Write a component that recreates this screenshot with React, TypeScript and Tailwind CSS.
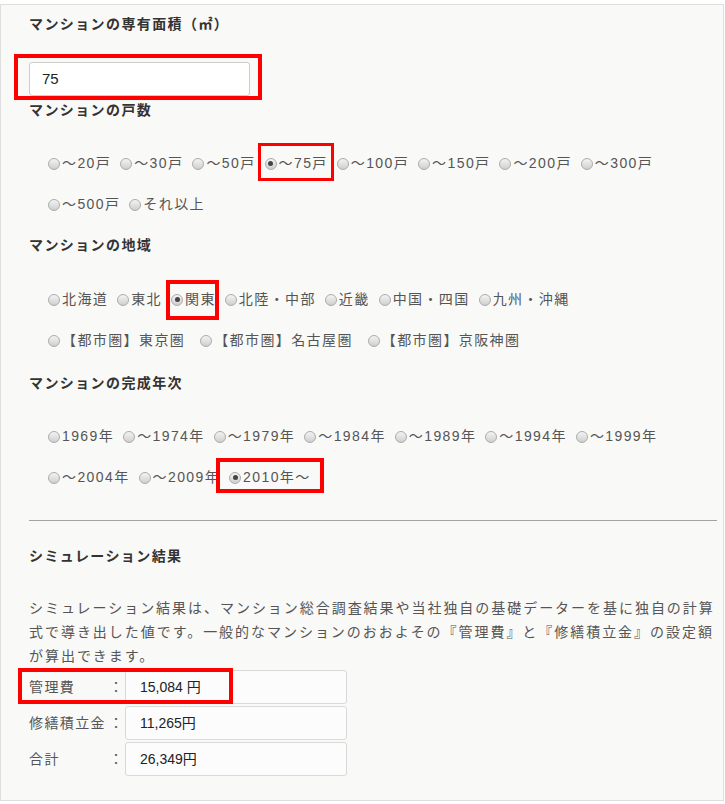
import React from "react";

type Opt = { label: string; checked?: boolean; mark?: string; gap?: string };

const sizeRows: Opt[][] = [
  [
    { label: "〜20戸" },
    { label: "〜30戸" },
    { label: "〜50戸" },
    {
      label: "〜75戸",
      checked: true,
      mark: "-left-[7px] -right-[6px] -top-[11px] -bottom-[7px] border-[3px]",
    },
    { label: "〜100戸" },
    { label: "〜150戸" },
    { label: "〜200戸" },
    { label: "〜300戸" },
  ],
  [{ label: "〜500戸" }, { label: "それ以上" }],
];

const areaRows: Opt[][] = [
  [
    { label: "北海道" },
    { label: "東北" },
    {
      label: "関東",
      checked: true,
      mark: "-left-[5px] -right-[3px] -top-[10px] -bottom-[10px] border-4",
    },
    { label: "北陸・中部" },
    { label: "近畿" },
    { label: "中国・四国" },
    { label: "九州・沖縄" },
  ],
  [
    { label: "【都市圏】東京圏", gap: "mr-[15px]" },
    { label: "【都市圏】名古屋圏", gap: "mr-[15px]" },
    { label: "【都市圏】京阪神圏", gap: "mr-[15px]" },
  ],
];

const yearRows: Opt[][] = [
  [
    { label: "1969年" },
    { label: "〜1974年" },
    { label: "〜1979年" },
    { label: "〜1984年" },
    { label: "〜1989年" },
    { label: "〜1994年" },
    { label: "〜1999年" },
  ],
  [
    { label: "〜2004年" },
    { label: "〜2009年" },
    {
      label: "2010年〜",
      checked: true,
      mark: "-left-[13px] -right-[13px] -top-[10px] -bottom-[5px] border-4",
    },
  ],
];

const results = [
  { label: "管理費", value: "15,084 円", mark: true },
  { label: "修繕積立金", value: "11,265円" },
  { label: "合計", value: "26,349円" },
];

function Radio({ opt }: { opt: Opt }) {
  return (
    <label className={`relative flex items-center h-5 ${opt.gap ?? "mr-[9px]"}`}>
      <span className="w-[12px] h-[12px] rounded-full border border-[#acacac] bg-gradient-to-b from-[#f4f4f4] to-[#cfcfcf] flex items-center justify-center">
        {opt.checked && (
          <span className="w-[5px] h-[5px] rounded-full bg-[#444]" />
        )}
      </span>
      <span className="ml-[2px] whitespace-pre">{opt.label}</span>
      {opt.mark && (
        <span className={`absolute border-[#ff0000] ${opt.mark}`} />
      )}
    </label>
  );
}

function Group({ rows, top }: { rows: Opt[][]; top: string }) {
  return (
    <div className={`${top} pl-[19px]`}>
      {rows.map((row, i) => (
        <div key={i} className="flex items-center h-[41px]">
          {row.map((o) => (
            <Radio key={o.label} opt={o} />
          ))}
        </div>
      ))}
    </div>
  );
}

function Heading({ children, top }: { children: React.ReactNode; top: string }) {
  return (
    <h3 className={`${top} text-[14px] leading-5 font-bold text-[#333]`}>
      {children}
    </h3>
  );
}

export default function App() {
  return (
    <div
      className="bg-white pt-[4px] text-[14px] tracking-[0.1em] text-[#555]"
      style={{ fontFamily: '"Liberation Sans", "Noto Sans CJK JP", sans-serif' }}
    >
      <div className="w-[724px] border border-[#dedede] bg-[#f9f9f7] pl-[28px] pr-[6px] pt-[9px] pb-[24px]">
        <Heading top="">マンションの専有面積（㎡）</Heading>
        <div className="relative mt-[28px] w-[221px]">
          <div className="h-[34px] border border-[#cccccc] rounded-[3px] bg-white flex items-center pl-[12px] text-[15px] tracking-normal text-[#222]">
            75
          </div>
          <span className="absolute -left-[15px] -right-[12px] -top-[8px] -bottom-[4px] border-4 border-[#ff0000]" />
        </div>

        <Heading top="mt-[4px]">マンションの戸数</Heading>
        <Group rows={sizeRows} top="mt-[23px]" />

        <Heading top="mt-[10px]">マンションの地域</Heading>
        <Group rows={areaRows} top="mt-[24px]" />

        <Heading top="mt-[12px]">マンションの完成年次</Heading>
        <Group rows={yearRows} top="mt-[23px]" />

        <hr className="mt-[22px] border-0 border-t border-[#a3a3a3]" />

        <Heading top="mt-[25px]">シミュレーション結果</Heading>
        <p className="mt-[30px] leading-6 tracking-[0.14em] whitespace-nowrap">
          シミュレーション結果は、マンション総合調査結果や当社独自の基礎データーを基に独自の計算
          <br />
          式で導き出した値です。一般的なマンションのおおよその『管理費』と『修繕積立金』の設定額
          <br />
          が算出できます。
        </p>

        <div className="mt-[2px] flex flex-col gap-[2px]">
          {results.map((r) => (
            <div key={r.label} className="relative flex items-center h-[34px] w-[319px]">
              <span className="w-[80px] whitespace-nowrap">{r.label}</span>
              <span className="w-[16px]">：</span>
              <div className="h-[34px] w-[222px] border border-[#d9d9d9] rounded-[3px] bg-[#fcfcfc] flex items-center pl-[14px] tracking-normal text-[#222]">
                {r.value}
              </div>
              {r.mark && (
                <span className="absolute -left-[11px] right-[115px] -top-[2px] bottom-0 border-4 border-[#ff0000]" />
              )}
            </div>
          ))}
        </div>
      </div>
    </div>
  );
}
